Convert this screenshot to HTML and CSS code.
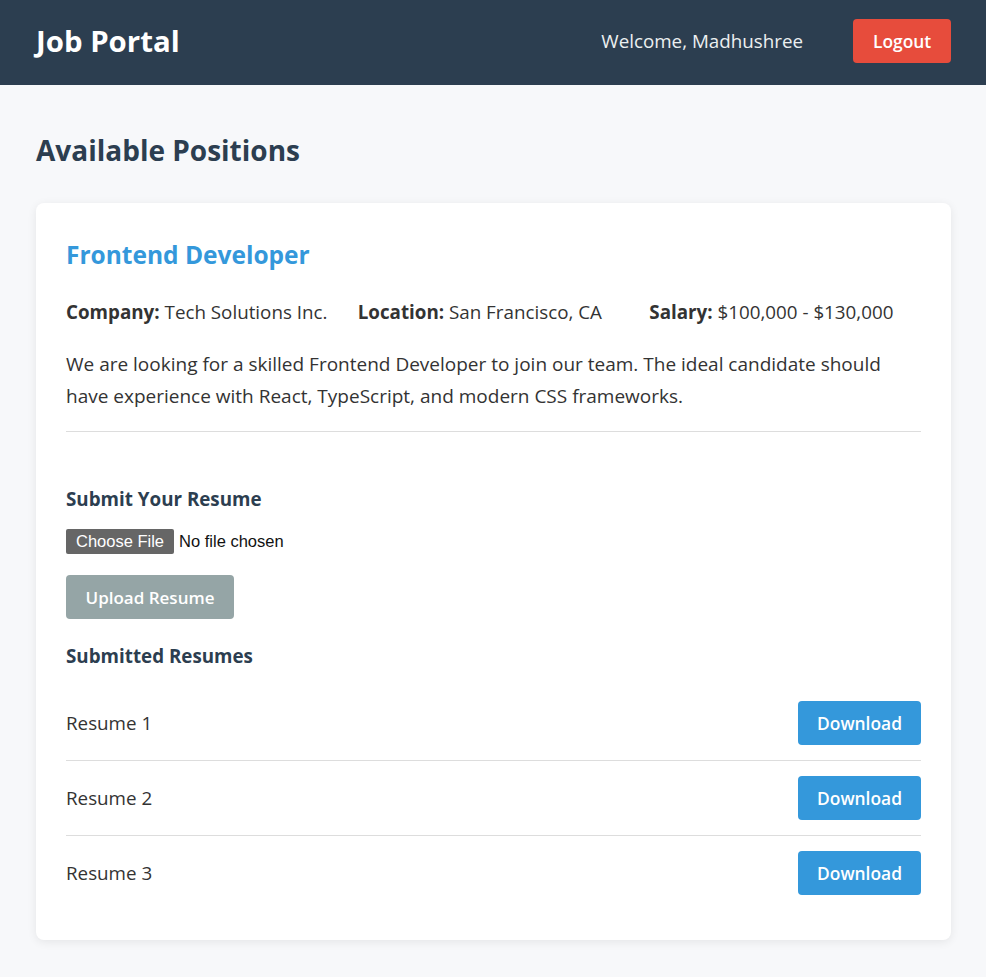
FILE: index.html
```html
<!DOCTYPE html>
<html lang="en">
<head>
<meta charset="utf-8">
<title>Job Portal</title>
<link rel="stylesheet" href="styles.css">
</head>
<body>
<header class="topbar">
  <div class="brand">Job Portal</div>
  <div class="user">
    <span class="welcome">Welcome, Madhushree</span>
    <button class="btn btn-logout">Logout</button>
  </div>
</header>
<main class="content">
  <h2 class="page-title">Available Positions</h2>
  <section class="card">
    <h3 class="job-title">Frontend Developer</h3>
    <div class="meta">
      <span><strong>Company:</strong> Tech Solutions Inc.</span>
      <span><strong>Location:</strong> San Francisco, CA</span>
      <span><strong>Salary:</strong> $100,000 - $130,000</span>
    </div>
    <p class="desc">We are looking for a skilled Frontend Developer to join our team. The ideal candidate should have experience with React, TypeScript, and modern CSS frameworks.</p>
    <div class="upload">
      <h4 class="sub">Submit Your Resume</h4>
      <div class="file-row"><span class="file-btn">Choose File</span><span class="file-name">No file chosen</span></div>
      <button class="btn btn-upload">Upload Resume</button>
    </div>
    <h4 class="sub sub-list">Submitted Resumes</h4>
    <ul class="resumes">
      <li class="resume"><span>Resume 1</span><button class="btn btn-dl">Download</button></li>
      <li class="resume"><span>Resume 2</span><button class="btn btn-dl">Download</button></li>
      <li class="resume last"><span>Resume 3</span><button class="btn btn-dl">Download</button></li>
    </ul>
  </section>
</main>
</body>
</html>
```
FILE: styles.css
```css
* { box-sizing: border-box; }
body {
  margin: 0;
  background: #f7f8fa;
  font-family: "Open Sans", "Noto Sans", sans-serif;
  color: #333;
  min-height: 977px;
}
.topbar {
  height: 85px;
  background: #2c3e50;
  display: flex;
  align-items: center;
  justify-content: space-between;
  padding: 19px 35px 22px 36px;
  color: #fff;
}
.brand { font-size: 29.4px; font-weight: 700; }
.user { display: flex; align-items: center; gap: 50px; }
.welcome { font-size: 18.8px; color: #ecf0f1; }
.btn {
  border: 0;
  border-radius: 4px;
  color: #fff;
  font-family: inherit;
  font-weight: 600;
  font-size: 17.4px;
  height: 44px;
  padding: 0 20px;
  cursor: pointer;
}
.btn-logout { background: #e74c3c; width: 98px; }
.content { padding: 45px 35px 37px 36px; }
.page-title {
  margin: 0 0 33px;
  font-size: 28px;
  color: #2c3e50;
  line-height: 40px;
}
.card {
  background: #fff;
  border-radius: 8px;
  box-shadow: 0 2px 10px rgba(0,0,0,0.08);
  padding: 30px;
}
.job-title {
  margin: 0;
  font-size: 24.5px;
  line-height: 44px;
  color: #3498db;
}
.meta {
  display: grid;
  grid-template-columns: repeat(3, 1fr);
  gap: 20px;
  font-size: 18.8px;
  margin-top: 23px;
  line-height: 24px;
  white-space: nowrap;
}
.meta strong { color: #333; }
.desc {
  margin: 24px 0 0;
  font-size: 19px;
  line-height: 32px;
  padding-bottom: 19px;
  border-bottom: 1px solid #ddd;
}
.upload { padding-top: 55px; }
.sub {
  margin: 0;
  font-size: 18.8px;
  line-height: 24px;
  color: #2c3e50;
}
.file-row {
  display: flex;
  align-items: center;
  margin-top: 18px;
  font-family: "Liberation Sans", Arial, sans-serif;
  font-size: 16.5px;
}
.file-btn {
  background: #666;
  color: #fff;
  padding: 3px 10px;
  border-radius: 2px;
  line-height: 19px;
}
.file-name { margin-left: 5px; color: #111; }
.btn-upload {
  background: #95a5a6;
  margin-top: 21px;
  width: 168px;
  padding: 0;
  font-size: 17px;
}
.sub-list { margin-top: 25px; }
.resumes {
  list-style: none;
  margin: 18px 0 0;
  padding: 0;
}
.resume {
  display: flex;
  align-items: center;
  justify-content: space-between;
  padding: 15px 0;
  border-bottom: 1px solid #ddd;
  font-size: 18.8px;
}
.resume.last { border-bottom: 0; }
.btn-dl { background: #3498db; width: 123px; padding: 0; }
```
